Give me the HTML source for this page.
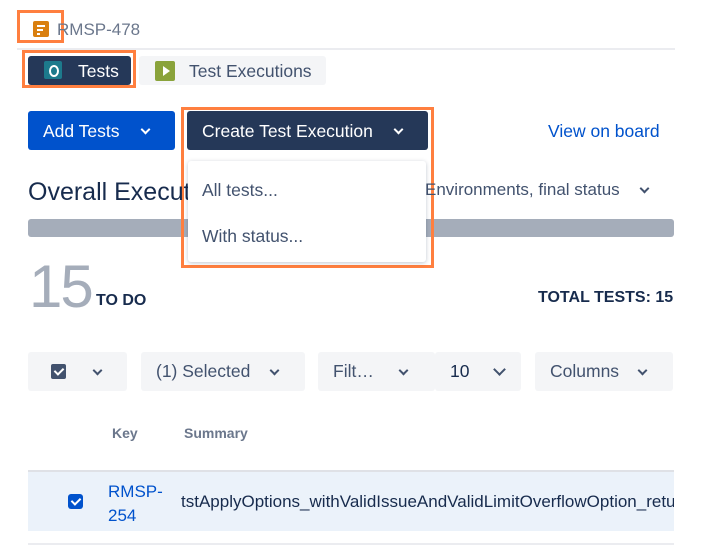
<!DOCTYPE html><html><head><style>
body{margin:0;width:706px;height:551px;background:#fff;font-family:"Liberation Sans",sans-serif;position:relative;overflow:hidden}
.a{position:absolute}
.ob{position:absolute;border:3px solid #ff7f3f;box-sizing:border-box}
.chev{position:absolute;width:5px;height:5px;border-right:2px solid currentColor;border-bottom:2px solid currentColor;transform:rotate(45deg)}
.tb{position:absolute;top:352px;height:39px;background:#f4f5f7;border-radius:3px;color:#42526e;font-size:17.5px;line-height:39px}
</style></head><body>
<div class="ob" style="left:17px;top:10px;width:47px;height:33px"></div>
<div class="a" style="left:33px;top:21px;width:16px;height:16px;background:#d97f0f;border-radius:2px"></div>
<div class="a" style="left:37px;top:25px;width:8px;height:2px;background:#fff"></div>
<div class="a" style="left:37px;top:29px;width:6px;height:2px;background:#fff"></div>
<div class="a" style="left:37px;top:33px;width:3px;height:2px;background:#fff"></div>
<div class="a" style="left:57px;top:20px;font-size:17px;color:#6b778c">RMSP-478</div>
<div class="a" style="left:17px;top:48px;width:658px;height:2px;background:#ebecf0"></div>

<div class="ob" style="left:22px;top:50px;width:114px;height:38px"></div>
<div class="a" style="left:28px;top:56px;width:103px;height:29px;background:#253858;border-radius:3px"></div>
<div class="a" style="left:44px;top:61px;width:18px;height:18px;background:#1d7a8c;border-radius:2px"></div>
<div class="a" style="left:49px;top:65px;width:6px;height:8px;border:2px solid #fff;border-radius:50%"></div>
<div class="a" style="left:78px;top:61px;font-size:17.5px;color:#fff">Tests</div>
<div class="a" style="left:139px;top:56px;width:187px;height:29px;background:#f4f5f7;border-radius:3px"></div>
<div class="a" style="left:155px;top:61px;width:20px;height:20px;background:#8aa33b;border-radius:2px"></div>
<div class="a" style="left:163px;top:66px;width:0;height:0;border-left:7px solid #fff;border-top:5px solid transparent;border-bottom:5px solid transparent"></div>
<div class="a" style="left:189px;top:61px;font-size:17.5px;color:#42526e">Test Executions</div>

<div class="a" style="left:28px;top:111px;width:147px;height:39px;background:#0052cc;border-radius:3px"></div>
<div class="a" style="left:43px;top:121px;font-size:17.5px;color:#fff">Add Tests</div>
<div class="chev" style="left:142px;top:126px;color:#fff"></div>

<div class="ob" style="left:181px;top:107px;width:253px;height:161px"></div>
<div class="a" style="left:187px;top:111px;width:241px;height:39px;background:#253858;border-radius:3px"></div>
<div class="a" style="left:202px;top:121px;font-size:17.5px;color:#fff">Create Test Execution</div>
<div class="chev" style="left:395px;top:126px;color:#fff"></div>

<div class="a" style="left:548px;top:121px;font-size:17.5px;color:#0052cc">View on board</div>
<div class="a" style="left:28px;top:178px;font-size:25px;color:#172b4d">Overall Execut</div>
<div class="a" style="left:425px;top:180px;font-size:17px;color:#42526e">Environments, final status</div>
<div class="chev" style="left:641px;top:185px;color:#42526e"></div>

<div class="a" style="left:188px;top:161px;width:238px;height:101px;background:#fff;border-radius:3px;box-shadow:0 1px 4px rgba(9,30,66,.25)"></div>
<div class="a" style="left:202px;top:180px;font-size:17.5px;color:#42526e">All tests...</div>
<div class="a" style="left:202px;top:226px;font-size:17.5px;color:#42526e">With status...</div>
<div class="a" style="left:28px;top:219px;width:646px;height:18px;background:#a5adba;border-radius:3px;z-index:-1"></div>

<div class="a" style="left:29px;top:256px;font-size:60px;color:#a5adba;line-height:62px;letter-spacing:-2px">15</div>
<div class="a" style="left:96px;top:292px;font-size:16px;font-weight:bold;color:#172b4d">TO DO</div>
<div class="a" style="left:538px;top:289px;font-size:16px;font-weight:bold;color:#172b4d">TOTAL TESTS: 15</div>

<div class="tb" style="left:28px;width:99px"></div>
<div class="a" style="left:51px;top:364px;width:15px;height:15px;background:#42526e;border-radius:2px"></div>
<div class="a" style="left:56px;top:366px;width:4px;height:7px;border-right:2px solid #fff;border-bottom:2px solid #fff;transform:rotate(45deg)"></div>
<div class="chev" style="left:94px;top:367px;color:#42526e"></div>
<div class="tb" style="left:141px;width:164px;padding-left:15px;box-sizing:border-box">(1) Selected</div>
<div class="chev" style="left:271px;top:367px;color:#42526e"></div>
<div class="tb" style="left:318px;width:117px;padding-left:15px;box-sizing:border-box">Filt…</div>
<div class="chev" style="left:400px;top:367px;color:#42526e"></div>
<div class="tb" style="left:435px;width:86px;padding-left:15px;box-sizing:border-box;color:#172b4d">10</div>
<div class="chev" style="left:495px;top:365px;color:#42526e;width:7px;height:7px"></div>
<div class="tb" style="left:535px;width:138px;padding-left:15px;box-sizing:border-box">Columns</div>
<div class="chev" style="left:639px;top:367px;color:#42526e"></div>

<div class="a" style="left:112px;top:425px;font-size:14px;color:#6b778c;font-weight:bold">Key</div>
<div class="a" style="left:184px;top:425px;font-size:14px;color:#6b778c;font-weight:bold">Summary</div>
<div class="a" style="left:28px;top:470px;width:646px;height:2px;background:#dfe1e6"></div>
<div class="a" style="left:28px;top:472px;width:646px;height:59px;background:#ebf2fa"></div>
<div class="a" style="left:68px;top:494px;width:15px;height:15px;background:#0052cc;border-radius:3px"></div>
<div class="a" style="left:73px;top:496px;width:4px;height:7px;border-right:2px solid #fff;border-bottom:2px solid #fff;transform:rotate(45deg)"></div>
<div class="a" style="left:108px;top:480px;font-size:17px;color:#0052cc;line-height:24px">RMSP-<br>254</div>
<div class="a" style="left:181px;top:492px;font-size:17px;color:#172b4d;white-space:nowrap;width:493px;overflow:hidden">tstApplyOptions_withValidIssueAndValidLimitOverflowOption_returns</div>
<div class="a" style="left:28px;top:543px;width:646px;height:2px;background:#ebecf0"></div>
</body></html>
